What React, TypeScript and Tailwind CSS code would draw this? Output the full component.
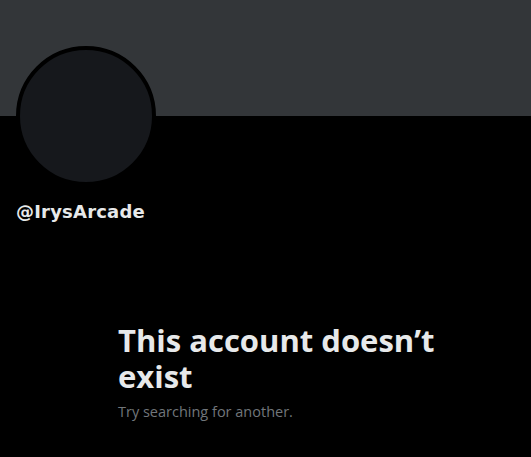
export default function App() {
  return (
    <div className="h-[457px] w-[531px] overflow-hidden bg-black" style={{ fontFamily: '"Open Sans", "Noto Sans", sans-serif' }}>
      <div className="h-[116px] bg-[#333639]" />
      <div className="relative px-4">
        <div className="-mt-[70px] h-[140px] w-[140px] rounded-full border-4 border-black bg-[#16181c]" />
        <div className="mt-[16px] text-[18px] font-bold leading-5 tracking-[0.2px] text-[#e7e9ea]" style={{ fontFamily: '"DejaVu Sans", sans-serif' }}>
          @IrysArcade
        </div>
      </div>
      <div className="mt-[100px] pl-[118px] pr-[80px]">
        <h1 className="text-[31px] font-bold leading-9 text-[#e7e9ea]">This account doesn’t exist</h1>
        <p className="mt-[8px] text-[14.5px] leading-5 text-[#71767b]">Try searching for another.</p>
      </div>
    </div>
  );
}
